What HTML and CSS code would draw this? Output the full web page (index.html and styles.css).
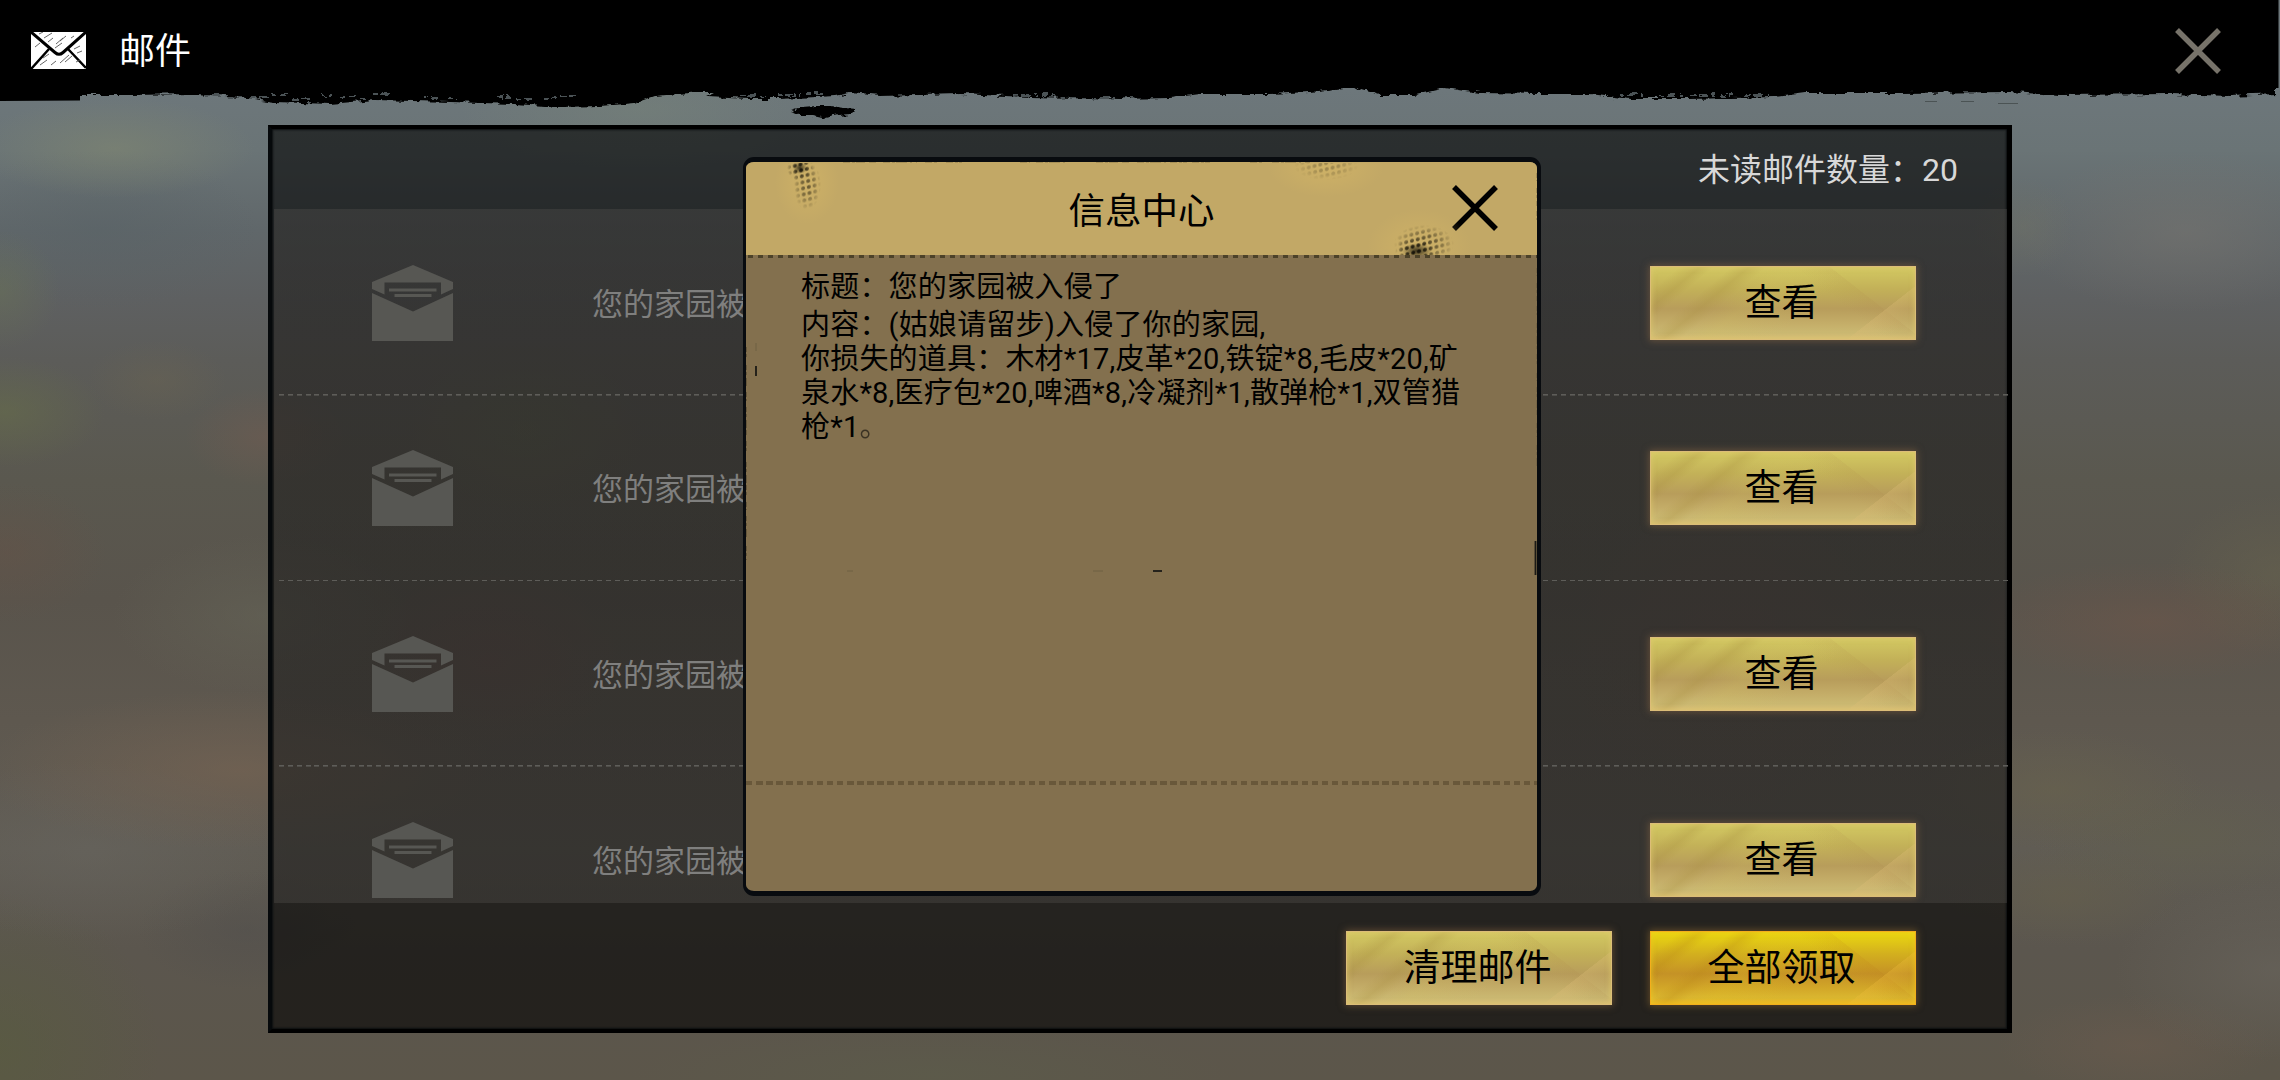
FILE: index.html
```html
<!DOCTYPE html>
<html lang="zh-CN">
<head>
    <meta charset="UTF-8">
    <meta name="viewport" content="width=device-width, initial-scale=1.0">
    <title>邮件</title>
    <link rel="stylesheet" href="styles.css">
</head>
<body>

<!-- shared symbols -->
<svg class="defs" width="0" height="0">
    <symbol id="mail-open" viewBox="0 0 81 76">
        <path d="M0 17 L41 0 L81 17 V24 L69 29.500 V17.500 H12.500 V29.500 L0 24 Z"/>
        <path d="M0 28 L41 46.500 L81 28 V76 H0 Z"/>
        <path d="M17 23.500 H64.500 V26.500 H17 Z M22.500 29 H59.500 V32 H22.500 Z"/>
    </symbol>
    <symbol id="cross" viewBox="0 0 48 48">
        <path d="M3 3 L45 45 M45 3 L3 45" fill="none" stroke="currentColor" stroke-width="5.500"/>
    </symbol>
</svg>

<header class="topbar">
    <svg class="topbar-edge" width="2280" height="130" viewBox="0 0 2280 130">
        <filter id="rough" x="0" y="0" width="2280" height="130" filterUnits="userSpaceOnUse">
            <feTurbulence type="fractalNoise" baseFrequency="0.100 0.250" numOctaves="3" seed="4"/>
            <feDisplacementMap in="SourceGraphic" scale="7" xChannelSelector="R" yChannelSelector="G"/>
        </filter>
        <path d="M0 0 H2278.500 V88 H0 Z"/>
        <path d="M0 101 V80 H80 V100.500 Z"/>
        <path d="M0 78 V98 H76 L80 95 H130 L195 94 L240 97 L275 102 L330 104 L375 100 L450 102 L515 104 L560 107 L600 106 L635 103 L655 96 L700 92 H716 L706 97 L750 99 L780 99 L835 96 L850 93 L880 96 L960 94 L1030 97 L1120 99 L1170 98 L1200 94 H1270 L1310 92 L1353 87 L1380 95 L1415 95 L1445 88 L1480 93 L1540 94 H1590 L1630 99 L1690 99 L1775 97 L1805 93 H1900 L2010 92 L2060 95 L2170 94 L2230 96 L2276 94 V78 Z" filter="url(#rough)"/>
        <path d="M791 111 L803 107 L815 106 L830 106 L845 108 L857 109 L852 114 L838 115 L826 118 L812 115 L800 115 Z" filter="url(#rough)"/>
        <g class="edge-scratch">
            <path d="M205 95 h18 m5 2 h14 m8 1 h17 m5 -3 h15 m6 4 h20 m8 -3 h12 m7 1 h25 m8 -3 h20 m30 4 h15 m10 0 h9 m40 -1 h13 m6 2 h19 m8 0 h14 m3 -3 h20" filter="url(#rough)"/>
            <path d="M740 96 h30 m8 -1 h22 m6 -2 h20 M1620 95 h30 m9 1 h25 m7 -1 h42 m12 0 h24" filter="url(#rough)"/>
            <path d="M1013 95 h40 m8 3 h54 m8 0 h12" filter="url(#rough)"/>
        </g>
        <path class="edge-dust" d="M1925 101.500 h12 m24 0 h13 m24 2 h20"/>
    </svg>
    <svg class="topbar-icon" width="55" height="37" viewBox="0 0 55 37">
        <rect width="55" height="37" fill="#fff"/>
        <path d="M0 0 L24 20.500 Q28 24 32 20.500 L55 0" fill="none" stroke="#000" stroke-width="3"/>
        <path d="M0 37 L18 17 M55 36 L37 17" fill="none" stroke="#000" stroke-width="2.500"/>
        <path d="M8 2 l4 -2 M13 6 l8 -5 M17 10 l5 -4 M25 12 l7 -6 M29 9 l6 -5 M24 16 l7 -5 M34 30 l7 -6 M29 31 l9 -8 M12 26 l6 -4 M9 33 l7 -5 M43 17 l6 -3 M46 21 l5 -2 M4 15 l5 -4 M20 33 l5 -4 M45 30 l4 -2 M40 6 l3 -2" stroke="#555" stroke-width="0.900"/>
    </svg>
    <h1>邮件</h1>
    <svg class="topbar-close" width="48" height="48"><use href="#cross"/></svg>
</header>

<main class="panel">
    <div class="panel-head">未读邮件数量：20</div>
    <ul class="mail-list">
        <li class="mail">
            <svg class="mail-icon" width="81" height="76"><use href="#mail-open"/></svg>
            <span class="mail-title">您的家园被入侵了</span>
            <button class="btn">查看</button>
        </li>
        <li class="mail">
            <svg class="mail-icon" width="81" height="76"><use href="#mail-open"/></svg>
            <span class="mail-title">您的家园被入侵了</span>
            <button class="btn">查看</button>
        </li>
        <li class="mail">
            <svg class="mail-icon" width="81" height="76"><use href="#mail-open"/></svg>
            <span class="mail-title">您的家园被入侵了</span>
            <button class="btn">查看</button>
        </li>
        <li class="mail">
            <svg class="mail-icon" width="81" height="76"><use href="#mail-open"/></svg>
            <span class="mail-title">您的家园被入侵了</span>
            <button class="btn">查看</button>
        </li>
    </ul>
    <div class="panel-foot">
        <button class="btn">清理邮件</button>
        <button class="btn btn-gold">全部领取</button>
    </div>
</main>

<section class="dialog">
    <div class="dialog-head">
        <h2>信息中心</h2>
        <svg class="dialog-close" width="48" height="48"><use href="#cross"/></svg>
    </div>
    <div class="dialog-body">
        <p class="dialog-title">标题：您的家园被入侵了</p>
        <p>内容：(姑娘请留步)入侵了你的家园,<br>你损失的道具：木材*17,皮革*20,铁锭*8,毛皮*20,矿<br>泉水*8,医疗包*20,啤酒*8,冷凝剂*1,散弹枪*1,双管猎<br>枪*1<span class="stop">。</span></p>
    </div>
    <div class="dialog-foot"></div>

    <!-- halftone spots and worn border -->
    <svg class="dialog-wear" width="798" height="739" viewBox="0 0 798 739">
        <defs>
            <pattern id="dots" width="6" height="6" patternUnits="userSpaceOnUse" patternTransform="rotate(-14) skewX(-8)">
                <circle cx="3" cy="3" r="2" fill="#17140a"/>
            </pattern>
            <radialGradient id="fade">
                <stop offset="0" stop-color="#fff"/>
                <stop offset="0.450" stop-color="#fff" stop-opacity="0.700"/>
                <stop offset="1" stop-color="#fff" stop-opacity="0"/>
            </radialGradient>
            <radialGradient id="glow">
                <stop offset="0" stop-color="#d3b566" stop-opacity="0.700"/>
                <stop offset="1" stop-color="#d3b566" stop-opacity="0"/>
            </radialGradient>
            <radialGradient id="ink">
                <stop offset="0" stop-color="#17140a" stop-opacity="0.800"/>
                <stop offset="1" stop-color="#17140a" stop-opacity="0"/>
            </radialGradient>
            <clipPath id="head-clip">
                <path d="M5 6 H793 V98 H5 Z"/>
            </clipPath>
            <mask id="spots">
                <ellipse cx="57" cy="11" rx="13" ry="13" fill="url(#fade)"/>
                <ellipse cx="64" cy="28" rx="14" ry="25" fill="url(#fade)" opacity="0.600"/>
                <ellipse cx="583" cy="9" rx="32" ry="14" fill="url(#fade)" opacity="0.300"/>
                <ellipse cx="672" cy="95" rx="20" ry="14" fill="url(#fade)"/>
                <ellipse cx="681" cy="87" rx="30" ry="19" fill="url(#fade)" opacity="0.700"/>
            </mask>
        </defs>
        <g clip-path="url(#head-clip)">
            <ellipse cx="64" cy="25" rx="32" ry="42" fill="url(#glow)"/>
            <ellipse cx="583" cy="10" rx="58" ry="30" fill="url(#glow)"/>
            <ellipse cx="676" cy="90" rx="52" ry="38" fill="url(#glow)"/>
            <ellipse cx="674" cy="94" rx="15" ry="8" fill="url(#ink)"/>
            <ellipse cx="57" cy="11" rx="7" ry="6" fill="url(#ink)"/>
            <path d="M5 6 H793 V98 H5 Z" fill="url(#dots)" mask="url(#spots)"/>
        </g>
        <path class="wear-tan" d="M100 4.800 h22 m4 0 h9 m5 0 h34 m8 0 h12 m9 0 h16 m58 0 h10 m6 0 h30 m30 0 h22 m4 0 h8 m7 0 h50 m5 0 h18 m40 0 h12 m10 0 h38"/>
        <g class="wear-olive">
            <path d="M3 190 v12 m0 6 v22 m0 5 v9 m0 6 v30 m0 4 v12 m0 9 v35 m0 5 v8 m0 6 v22 m0 8 v14"/>
            <path d="M794.500 16 v8 m0 7 v18 m0 5 v9 m0 48 v8 m0 7 v18 m0 5 v9 m0 8 v26 m0 5 v12 m0 7 v8 m0 6 v30 m0 6 v14 m0 8 v22"/>
            <path d="M378 735 h46 m6 0 h12 m20 0 h14 m8 0 h25 m6 0 h7 m20 0 h12 m24 0 h8 m60 0 h30 m10 0 h26"/>
        </g>
        <g class="wear-dark">
            <path d="M13 209 v10 M792.500 384 v34"/>
            <path d="M410 414 h9"/>
        </g>
        <path class="wear-faint" d="M13 186 v8 M104 414 h6 M350 414 h10"/>
    </svg>
</section>

</body>
</html>
```
FILE: styles.css
```css
* {
    box-sizing: border-box;
}
body {
    position: relative;
    width: 2280px;
    height: 1080px;
    margin: 0;
    overflow: hidden;
    font-family: Roboto, "Noto Sans CJK SC", sans-serif;
    background:
        radial-gradient(ellipse 140px 50px at 115px 148px, rgba(130, 136, 112, 0.55), transparent),
        radial-gradient(ellipse 60px 60px at 0 290px, rgba(108, 118, 82, 0.4), transparent),
        radial-gradient(ellipse 100px 55px at 5px 412px, rgba(104, 112, 72, 0.5), transparent),
        radial-gradient(ellipse 160px 80px at 100px 230px, rgba(88, 98, 102, 0.5), transparent),
        radial-gradient(ellipse 70px 40px at 157px 380px, rgba(110, 102, 80, 0.35), transparent),
        radial-gradient(ellipse 80px 50px at 265px 437px, rgba(114, 92, 80, 0.5), transparent),
        radial-gradient(ellipse 100px 70px at 7px 552px, rgba(102, 82, 70, 0.45), transparent),
        radial-gradient(ellipse 150px 80px at 263px 615px, rgba(102, 102, 88, 0.5), transparent),
        radial-gradient(ellipse 260px 80px at 240px 770px, rgba(120, 100, 82, 0.6), transparent),
        radial-gradient(ellipse 200px 90px at 90px 850px, rgba(104, 102, 96, 0.5), transparent),
        radial-gradient(ellipse 110px 60px at 247px 930px, rgba(80, 78, 76, 0.5), transparent),
        radial-gradient(ellipse 160px 160px at 0 1050px, rgba(88, 92, 62, 0.6), transparent),
        radial-gradient(ellipse 50px 50px at 2023px 227px, rgba(116, 116, 100, 0.4), transparent),
        radial-gradient(ellipse 170px 80px at 2185px 232px, rgba(122, 118, 112, 0.5), transparent),
        radial-gradient(ellipse 180px 60px at 2150px 622px, rgba(108, 86, 74, 0.6), transparent),
        radial-gradient(ellipse 110px 80px at 2275px 575px, rgba(104, 100, 78, 0.5), transparent),
        radial-gradient(ellipse 150px 60px at 2055px 790px, rgba(106, 100, 76, 0.5), transparent),
        radial-gradient(ellipse 150px 60px at 2180px 838px, rgba(98, 96, 76, 0.5), transparent),
        radial-gradient(ellipse 120px 50px at 2065px 895px, rgba(102, 96, 74, 0.5), transparent),
        radial-gradient(ellipse 160px 90px at 2275px 970px, rgba(108, 104, 96, 0.5), transparent),
        radial-gradient(ellipse 140px 50px at 2137px 1045px, rgba(110, 92, 78, 0.45), transparent),
        radial-gradient(ellipse 130px 90px at 490px 660px, rgba(112, 78, 74, 0.45), transparent),
        radial-gradient(ellipse 120px 90px at 525px 430px, rgba(98, 104, 76, 0.5), transparent),
        radial-gradient(ellipse 160px 160px at 1730px 650px, rgba(106, 82, 72, 0.4), transparent),
        radial-gradient(ellipse 300px 50px at 930px 1075px, rgba(92, 96, 74, 0.4), transparent),
        radial-gradient(ellipse 180px 60px at 640px 110px, rgba(122, 134, 120, 0.4), transparent),
        linear-gradient(#6d777b 90px, #6a7476 150px, #60676a 230px, #5e6061 300px, #5c5c59 360px, #5a584f 480px, #59544c 600px, #5e584f 720px, #605c54 850px, #5b564e 950px, #5c564a 1080px);
}
h1, h2, p, ul {
    margin: 0;
    padding: 0;
    font-weight: normal;
}
.defs {
    position: absolute;
}

/* top bar */
.topbar {
    position: relative;
    display: flex;
    align-items: center;
    height: 101px;
    padding: 0 58px 0 31px;
    color: #fff;
}
.topbar-edge {
    position: absolute;
    top: 0;
    left: 0;
}
.edge-scratch {
    fill: none;
    stroke: #4c5356;
    stroke-width: 2;
    stroke-dasharray: 5 3 9 4 3 6;
}
.edge-dust {
    fill: none;
    stroke: #4b5354;
    stroke-width: 1.2;
}
.topbar-icon {
    position: relative;
}
.topbar h1 {
    position: relative;
    margin-left: 33px;
    padding-top: 3px;
    font-size: 36px;
    line-height: 52px;
}
.topbar-close {
    position: relative;
    margin-left: auto;
    color: #77736a;
}

/* mail panel */
.panel {
    display: flex;
    flex-direction: column;
    width: 1744px;
    height: 908px;
    margin: 24px 0 0 268px;
    border: 4px solid #000;
    border-left-color: #06090b;
    border-right-width: 5px;
    background: rgba(0, 0, 0, 0.6);
    box-shadow: inset 0 0 2px 1px #0b0e10;
}
.panel-head {
    height: 80px;
    padding-right: 49px;
    font-size: 32px;
    line-height: 82px;
    text-align: right;
    color: #d8d8d8;
}
.mail-list {
    height: 694px;
    margin: 0 -5px 0 2px;
    padding-top: 1px;
    overflow: hidden;
    list-style: none;
    background: linear-gradient(rgba(95, 92, 88, 0.29), rgba(95, 92, 88, 0.29)) 0 0 / calc(100% - 5px) 100% no-repeat;
}
.mail {
    display: flex;
    align-items: center;
    height: 185.6px;
    padding: 0 96px 0 98px;
    background: repeating-linear-gradient(90deg, #5e5d59 0 5px, transparent 5px 8.84px) 5px 100% / 100% 1.6px no-repeat;
}
.mail-icon {
    fill: #575753;
}
.mail-title {
    margin-left: 139px;
    padding-bottom: 3px;
    font-size: 31px;
    color: #7f7f7e;
}
.mail .btn {
    margin-left: auto;
}
.panel-foot {
    display: flex;
    justify-content: flex-end;
    gap: 38px;
    padding: 28px 91px 0 0;
}

.btn {
    width: 266px;
    height: 74px;
    padding: 0 3px 6px 0;
    border: 1.5px solid #dcbd78;
    font-family: inherit;
    font-size: 37px;
    color: #000;
    background:
        linear-gradient(142deg, transparent 81%, rgba(222, 190, 120, 0.3) 81.2%, transparent 92%),
        linear-gradient(38deg, transparent 66%, rgba(170, 130, 70, 0.1) 76%, transparent 76.2%),
        linear-gradient(140deg, transparent 8%, rgba(165, 140, 60, 0.25) 14%, transparent 18%, transparent 23%, rgba(165, 140, 60, 0.25) 28%, transparent 33%, rgba(215, 200, 100, 0.15) 40%, transparent 60%),
        linear-gradient(#d3c962, #c3b158 30%, #b89d5b 58%, #c4ad68 78%, #cbb972 92%, #d8bd78);
    box-shadow: 0 0 7px 1px rgba(150, 110, 70, 0.5), inset 0 0 5px 1px rgba(222, 200, 110, 0.7);
}
.btn-gold {
    border-color: #f3ae1c;
    background:
        linear-gradient(142deg, transparent 81%, rgba(240, 190, 60, 0.3) 81.2%, transparent 92%),
        linear-gradient(38deg, transparent 66%, rgba(180, 110, 20, 0.1) 76%, transparent 76.2%),
        linear-gradient(140deg, transparent 8%, rgba(180, 130, 20, 0.25) 14%, transparent 18%, transparent 23%, rgba(180, 130, 20, 0.25) 28%, transparent 33%, rgba(230, 200, 30, 0.15) 40%, transparent 60%),
        linear-gradient(#ebd910, #d3b01e 30%, #c59226 58%, #d2a728 78%, #dbb730 92%, #eeb424);
    box-shadow: 0 0 7px 1px rgba(150, 110, 50, 0.55), inset 0 0 5px 1px rgba(240, 200, 30, 0.7);
}

/* message dialog, over the panel */
.dialog {
    position: absolute;
    top: 157px;
    left: 743px;
    display: flex;
    flex-direction: column;
    width: 798px;
    height: 739px;
    border: 4px solid #080b0f;
    border-width: 5px 4px 5px 3px;
    border-radius: 11px;
    background: #83704e;
    overflow: hidden;
    color: #000;
}
.dialog-head {
    display: grid;
    grid-template-columns: 1fr auto 1fr;
    align-items: center;
    height: 96px;
    flex: none;
    padding-right: 38px;
    background:
        repeating-linear-gradient(90deg, #4c4229 0 5px, transparent 5px 10.1px) 2px 100% / 100% 3px no-repeat,
        linear-gradient(#c2a866 93px, #83704e 93px);
}
.dialog-head h2 {
    grid-column: 2;
    margin-left: 38px;
    padding-top: 4px;
    font-size: 36.5px;
    line-height: 54px;
}
.dialog-close {
    justify-self: end;
    margin-bottom: 5px;
}
.dialog-body {
    flex: none;
    height: 523px;
    padding: 10px 0 0 55px;
    font-size: 29px;
    line-height: 34px;
    letter-spacing: 0.2px;
    white-space: nowrap;
}
.dialog-title {
    margin: 2px 0 4px;
}
.stop {
    opacity: 0.55;
}
.dialog-foot {
    height: 4px;
    background: repeating-linear-gradient(90deg, #69583a 0 6.5px, transparent 6.5px 10.1px);
}
.dialog-wear {
    position: absolute;
    top: -5px;
    left: -3px;
    fill: none;
}
.wear-tan {
    stroke: #8c7846;
    stroke-width: 1.6;
    stroke-dasharray: 7 2 3 1 11 3 2 4;
}
.wear-olive {
    stroke: #5f5238;
    stroke-width: 1.6;
    stroke-dasharray: 5 2 3 3 8 2;
}
.wear-dark {
    stroke: #1b1a16;
    stroke-width: 1.8;
}
.wear-faint {
    stroke: #6f6043;
    stroke-width: 1;
}
```
